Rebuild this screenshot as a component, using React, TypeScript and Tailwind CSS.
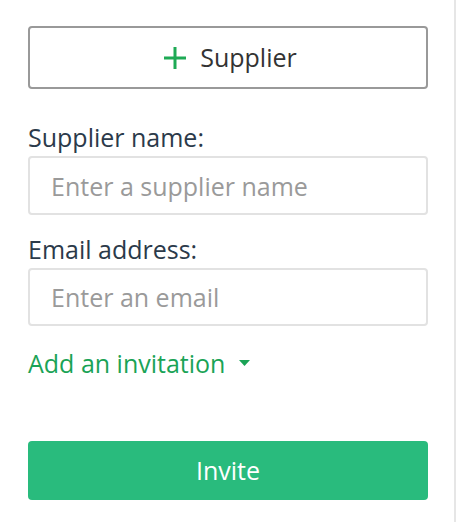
export default function App() {
  return (
    <div className="flex h-[522px] w-[456px] bg-white font-['Open_Sans',sans-serif]">
      <div className="flex-1 pl-[28px] pr-[26px] pt-[26px]">
        <button className="flex h-[63px] w-[400px] items-center justify-center gap-[14px] rounded-[4px] border-2 border-[#999999] bg-white pl-[5px] text-[25px] text-[#333333]">
          <svg width="22" height="22" viewBox="0 0 22 22" className="shrink-0">
            <path d="M11 0v22M0 11h22" stroke="#1eaa55" strokeWidth="3" />
          </svg>
          <span>Supplier</span>
        </button>

        <label className="mt-[33px] block text-[25px] leading-[30px] text-[#2b3a4a]">Supplier name:</label>
        <input
          className="mt-[4px] block h-[59px] w-[400px] rounded-[4px] border-2 border-[#e2e2e2] px-[21px] text-[25px] text-[#333] outline-none placeholder:text-[#9a9a9a]"
          placeholder="Enter a supplier name"
        />

        <label className="mt-[19px] block text-[25px] leading-[30px] text-[#2b3a4a]">Email address:</label>
        <input
          className="mt-[4px] block h-[58px] w-[400px] rounded-[4px] border-2 border-[#e2e2e2] px-[21px] text-[25px] text-[#333] outline-none placeholder:text-[#9a9a9a]"
          placeholder="Enter an email"
        />

        <button className="mt-[22px] flex items-center gap-[14px] text-[25px] leading-[30px] text-[#1aa356]">
          <span>Add an invitation</span>
          <svg width="11" height="6" viewBox="0 0 11 6">
            <path d="M0 0h11L5.5 6z" fill="#1aa356" />
          </svg>
        </button>

        <button className="mt-[63px] flex h-[59px] w-[400px] items-center justify-center rounded-[4px] bg-[#29bb7d] text-[25px] text-white">
          Invite
        </button>
      </div>
      <div className="w-[2px] bg-[#e6e6e6]" />
    </div>
  );
}
